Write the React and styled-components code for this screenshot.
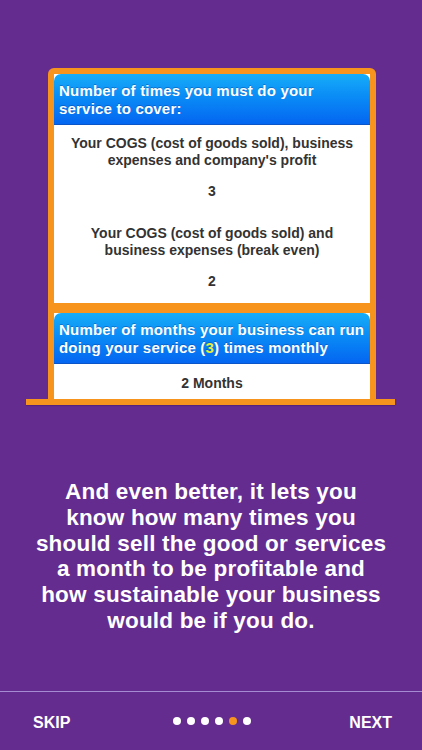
import styled, { createGlobalStyle } from "styled-components";

const GlobalStyle = createGlobalStyle`
	html, body {
		margin: 0;
		padding: 0;
		background: #652c8f;
	}
	body {
		font-family: "Liberation Sans", Arial, sans-serif;
		-webkit-font-smoothing: antialiased;
	}
`;

const Screen = styled.div`
	width: 422px;
	height: 750px;
	background: #652c8f;
	display: flex;
	flex-direction: column;
	overflow: hidden;
`;

const Stage = styled.section`
	padding-top: 68px;
	display: flex;
	flex-direction: column;
`;

const Frame = styled.div`
	width: 316px;
	margin-left: 48px;
	padding: 6px 6px 0;
	background: #f7941d;
	border-radius: 6px 6px 0 0;
	display: flex;
	flex-direction: column;
	gap: 10px;
`;

const Shelf = styled.div`
	width: 369px;
	height: 6px;
	margin-left: 26px;
	background: #f7941d;
	box-shadow: 0 1px 1px rgba(60, 20, 90, 0.35);
`;

const Panel = styled.div`
	background: #fff;
	display: flex;
	flex-direction: column;
`;

const PanelHeader = styled.div`
	padding: ${(p) => p.$pad};
	background: linear-gradient(to bottom, #16adf8 0%, #0a8cf6 45%, #0466f1 100%);
	border-radius: 7px 7px 0 0;
	border-bottom: 1px solid #0a55c8;
	color: #fff;
	font-weight: 700;
	font-size: 15px;
	line-height: 17.5px;
	letter-spacing: 0.2px;
	white-space: nowrap;
	text-shadow: 0 -1px 0 rgba(0, 40, 120, 0.35);
`;

const Highlight = styled.span`
	color: #e4f03a;
`;

const PanelBody = styled.div`
	padding: ${(p) => p.$pad};
	display: flex;
	flex-direction: column;
	align-items: center;
	color: #333;
	font-weight: 700;
	font-size: 14px;
	line-height: 17px;
	text-align: center;
`;

const Label = styled.div`
	margin-bottom: 14px;
`;

const Value = styled.div`
	margin-bottom: ${(p) => p.$gap || 0}px;
`;

const Message = styled.p`
	margin: 74px 0 0;
	padding: 0 10px;
	color: #fff;
	font-weight: 700;
	font-size: 22.5px;
	line-height: 25.8px;
	letter-spacing: 0.2px;
	white-space: nowrap;
	text-align: center;
`;

const Footer = styled.footer`
	margin-top: auto;
	height: 58px;
	border-top: 1px solid #a58bd2;
	display: grid;
	grid-template-columns: 1fr auto 1fr;
	align-items: center;
	padding: 0 30px 0 33px;
	color: #fff;
	font-weight: 700;
	font-size: 16px;
`;

const NavButton = styled.span`
	justify-self: ${(p) => (p.$end ? "end" : "start")};
	padding-top: 4px;
	cursor: pointer;
`;

const Dots = styled.div`
	display: flex;
	gap: 6px;
	margin-left: -2px;
`;

const Dot = styled.span`
	width: 8px;
	height: 8px;
	border-radius: 50%;
	background: ${(p) => (p.$active ? "#f7941d" : "#fff")};
`;

function App() {
	const pages = [0, 1, 2, 3, 4, 5];
	const active = 4;

	return (
		<Screen>
			<GlobalStyle />

			<Stage>
				<Frame>
					<Panel>
						<PanelHeader $pad="8px 5px 7px">
							Number of times you must do your
							<br />
							service to cover:
						</PanelHeader>

						<PanelBody $pad="10px 8px 13px">
							<Label>
								Your COGS (cost of goods sold), business
								<br />
								expenses and company's profit
							</Label>
							<Value $gap={25}>3</Value>
							<Label>
								Your COGS (cost of goods sold) and
								<br />
								business expenses (break even)
							</Label>
							<Value>2</Value>
						</PanelBody>
					</Panel>

					<Panel>
						<PanelHeader $pad="8px 5px 7px">
							Number of months your business can run
							<br />
							doing your service (<Highlight>3</Highlight>) times monthly
						</PanelHeader>

						<PanelBody $pad="11px 8px 7px">
							<Value>2 Months</Value>
						</PanelBody>
					</Panel>
				</Frame>
				<Shelf />
			</Stage>

			<Message>
				And even better, it lets you
				<br />
				know how many times you
				<br />
				should sell the good or services
				<br />
				a month to be profitable and
				<br />
				how sustainable your business
				<br />
				would be if you do.
			</Message>

			<Footer>
				<NavButton>SKIP</NavButton>
				<Dots>
					{pages.map((p) => (
						<Dot key={p} $active={p === active} />
					))}
				</Dots>
				<NavButton $end>NEXT</NavButton>
			</Footer>
		</Screen>
	);
}

export default App;
